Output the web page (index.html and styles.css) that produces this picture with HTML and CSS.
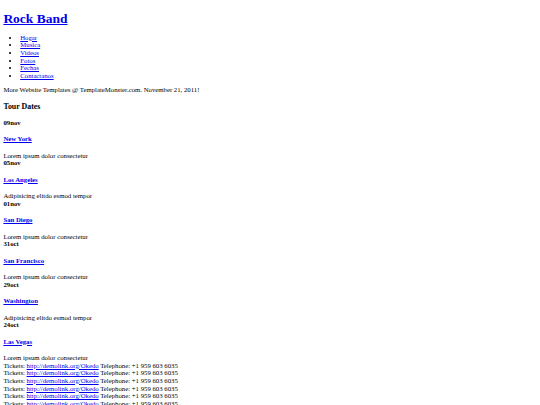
FILE: index.html
```html
<!DOCTYPE html>
<html>
<head>
<meta charset="utf-8">
<title>Rock Band</title>
<link rel="stylesheet" href="styles.css">
</head>
<body class="page">
<h1 class="logo"><a href="#">Rock Band</a></h1>
<ul class="menu">
<li><a href="#">Hogar</a></li>
<li><a href="#">Musica</a></li>
<li><a href="#">Videos</a></li>
<li><a href="#">Fotos</a></li>
<li><a href="#">Fechas</a></li>
<li><a href="#">Contactanos</a></li>
</ul>
<p class="note">More Website Templates @ TemplateMonster.com. November 21, 2011!</p>
<h3 class="section-title">Tour Dates</h3>
<div class="tour">
<div class="date">09nov</div>
<h4 class="city"><a href="#">New York</a></h4>
<div class="desc">Lorem ipsum dolor consectetur</div>
<div class="date">05nov</div>
<h4 class="city"><a href="#">Los Angeles</a></h4>
<div class="desc">Adipisicing elitdo esmod tempor</div>
<div class="date">01nov</div>
<h4 class="city"><a href="#">San Diego</a></h4>
<div class="desc">Lorem ipsum dolor consectetur</div>
<div class="date">31oct</div>
<h4 class="city"><a href="#">San Francisco</a></h4>
<div class="desc">Lorem ipsum dolor consectetur</div>
<div class="date">29oct</div>
<h4 class="city"><a href="#">Washington</a></h4>
<div class="desc">Adipisicing elitdo esmod tempor</div>
<div class="date">24oct</div>
<h4 class="city"><a href="#">Las Vegas</a></h4>
<div class="desc">Lorem ipsum dolor consectetur</div>
</div>
<div class="tickets">
<div class="ticket">Tickets: <a href="#">http://demolink.org/Okedo</a> Telephone: +1 959 603 6035</div>
<div class="ticket">Tickets: <a href="#">http://demolink.org/Okedo</a> Telephone: +1 959 603 6035</div>
<div class="ticket">Tickets: <a href="#">http://demolink.org/Okedo</a> Telephone: +1 959 603 6035</div>
<div class="ticket">Tickets: <a href="#">http://demolink.org/Okedo</a> Telephone: +1 959 603 6035</div>
<div class="ticket">Tickets: <a href="#">http://demolink.org/Okedo</a> Telephone: +1 959 603 6035</div>
<div class="ticket">Tickets: <a href="#">http://demolink.org/Okedo</a> Telephone: +1 959 603 6035</div>
</div>
</body>
</html>
```
FILE: styles.css
```css
html {
  background: #ffffff;
}
.page {
  zoom: 0.421875;
  margin: 8px;
  font-family: "Liberation Serif", "Times New Roman", serif;
  font-size: 16px;
  line-height: 18px;
  color: #000000;
}
.page a {
  color: #0000ee;
  text-decoration: underline;
}
.logo {
  font-size: 32px;
  line-height: 37px;
  margin: 17px 0 18px;
}
.menu {
  margin: 16px 0;
  padding-left: 40px;
  list-style: disc;
}
.note {
  margin: 16px 0;
}
.section-title {
  font-size: 18.72px;
  line-height: 22px;
  margin: 18.72px 0;
}
.date {
  font-weight: bold;
}
.city {
  font-size: 16px;
  margin: 21px 0;
}
```
